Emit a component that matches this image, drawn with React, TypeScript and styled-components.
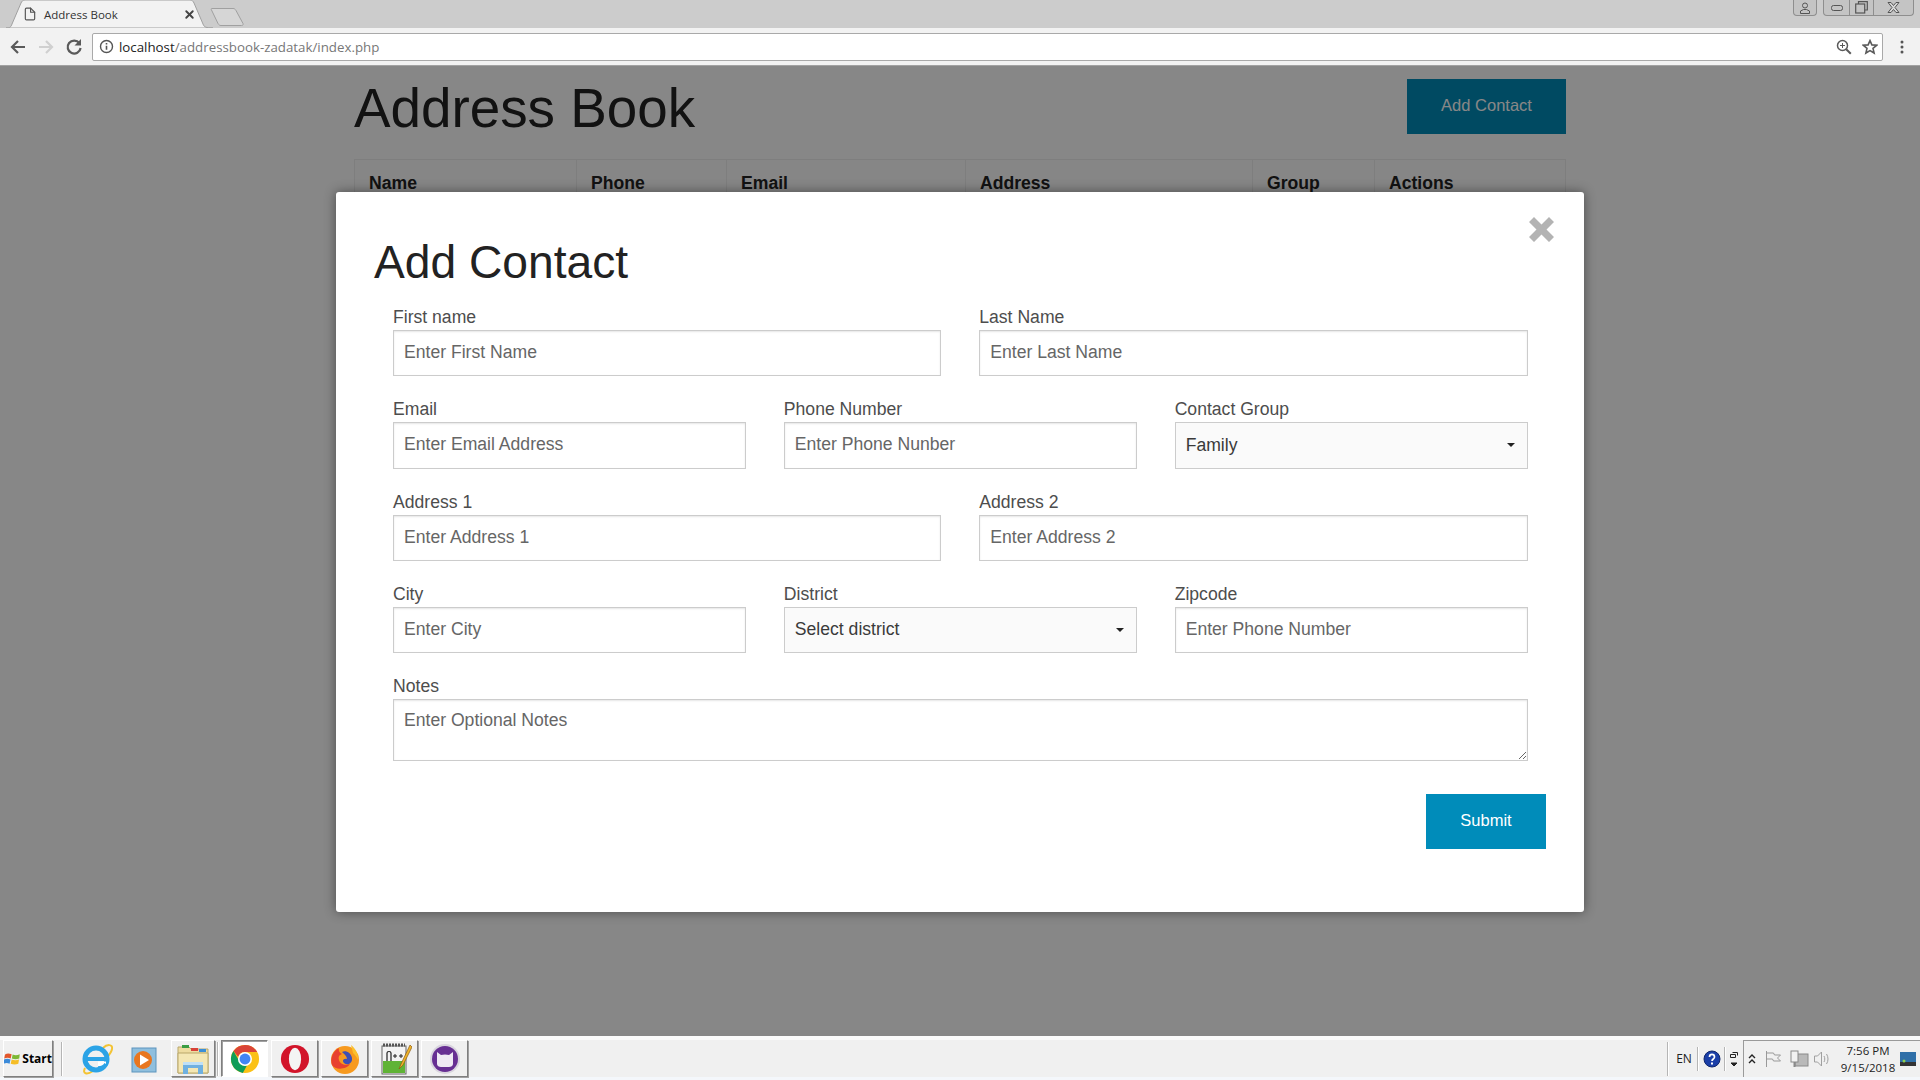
import React from "react";
import styled, { createGlobalStyle } from "styled-components";
import { FiFile, FiX } from "react-icons/fi";

const GlobalStyle = createGlobalStyle`
  html, body {
    margin: 0;
    padding: 0;
    height: 100%;
    overflow: hidden;
    background: #fff;
  }
  * {
    box-sizing: border-box;
  }
`;

const Screen = styled.div`
  display: flex;
  flex-direction: column;
  width: 1920px;
  height: 1080px;
  font-family: "Liberation Sans", Arial, sans-serif;
`;

/* browser window */
const TabStrip = styled.div`
  display: flex;
  align-items: flex-end;
  justify-content: space-between;
  height: 28px;
  background: #cccccc;
  flex-shrink: 0;
`;

const Tabs = styled.div`
  display: flex;
  align-items: flex-end;
  padding-left: 6px;
`;

const Tab = styled.div`
  position: relative;
  display: flex;
  align-items: center;
  width: 207px;
  height: 28px;
  padding: 0 17px 0 17px;
  color: #333;
  font-family: "Open Sans", sans-serif;
  font-size: 11.5px;
`;

const TabShape = styled.svg`
  position: absolute;
  left: 0;
  top: 0;
`;

const TabIcon = styled(FiFile)`
  position: relative;
  font-size: 14px;
  color: #555;
  margin-right: 7px;
`;

const TabTitle = styled.span`
  position: relative;
  flex: 1;
`;

const TabClose = styled(FiX)`
  position: relative;
  font-size: 13px;
  stroke-width: 3.5;
  color: #444;
`;

const NewTab = styled.svg`
  margin-left: -3px;
  margin-bottom: 1px;
`;

const WindowButtons = styled.div`
  display: flex;
  align-self: flex-start;
  gap: 6px;
  padding-right: 6px;
`;

const WindowGroup = styled.div`
  display: flex;
  height: 16px;
  border: 1px solid #8e8e8e;
  border-top: none;
  border-radius: 0 0 4px 4px;
  background: #c4c4c4;
`;

const WindowButton = styled.div<{ $w: number }>`
  display: flex;
  align-items: center;
  justify-content: center;
  width: ${(p) => p.$w}px;
  & + & {
    border-left: 1px solid #8e8e8e;
  }
`;

const Toolbar = styled.div`
  display: flex;
  align-items: center;
  height: 38px;
  padding: 0 0 0 8px;
  background: #f2f2f2;
  border-bottom: 1px solid #a2a2a2;
  flex-shrink: 0;
`;

const NavIcons = styled.div`
  display: flex;
  align-items: center;
  gap: 8px;
  width: 84px;
`;

const Omnibox = styled.div`
  display: flex;
  align-items: center;
  width: 1791px;
  height: 28px;
  padding: 0 4px 0 6px;
  background: #fff;
  border: 1px solid #a9a9a9;
  border-radius: 2px;
`;

const Url = styled.div`
  flex: 1;
  margin-left: 5px;
  font-family: "Open Sans", sans-serif;
  font-size: 13.3px;
  color: #777;
`;

const UrlHost = styled.span`
  color: #222;
`;

const OmniIcons = styled.div`
  display: flex;
  align-items: center;
  gap: 10px;
`;

const MenuDots = styled.svg`
  margin-left: 17px;
`;

/* the page behind the dialog */
const Page = styled.main`
  position: relative;
  flex: 1;
  overflow: hidden;
  background: #fff;
`;

const Container = styled.div`
  width: 1212px;
  margin: 0 auto;
`;

const PageHeader = styled.header`
  display: flex;
  align-items: flex-start;
  justify-content: space-between;
  height: 93px;
  padding-top: 13px;
`;

const PageTitle = styled.h1`
  margin: 0;
  font-size: 54.8px;
  line-height: 58px;
  font-weight: 400;
  color: #222;
`;

const PrimaryButton = styled.button<{ $w: number }>`
  width: ${(p) => p.$w}px;
  height: 55px;
  padding: 0 0 2px;
  border: none;
  background: #008cba;
  color: #fff;
  font-family: "Liberation Sans", Arial, sans-serif;
  font-size: 16.5px;
`;

const Table = styled.table`
  width: 100%;
  table-layout: fixed;
  border-collapse: collapse;
  background: #fff;
  border: 1px solid #eeeeee;
`;

const HeadCell = styled.th<{ $w?: number }>`
  width: ${(p) => (p.$w ? `${p.$w}px` : "auto")};
  height: 60px;
  padding: 11px 14px;
  border: 1px solid #eeeeee;
  background: #fdfdfd;
  text-align: left;
  vertical-align: top;
  font-size: 17.6px;
  line-height: 24px;
  font-weight: 700;
  color: #222;
`;

/* dialog */
const Overlay = styled.div`
  position: absolute;
  inset: 0;
  display: flex;
  justify-content: center;
  padding-top: 126px;
  background: rgba(0, 0, 0, 0.47);
`;

const Modal = styled.section`
  position: relative;
  width: 1248px;
  height: 720px;
  padding: 41px 38px 0;
  background: #fff;
  border-radius: 3px;
  box-shadow: 0 0 12px rgba(0, 0, 0, 0.45);
`;

const CloseButton = styled.svg`
  position: absolute;
  top: 25px;
  right: 30px;
`;

const ModalTitle = styled.h2`
  margin: 0 0 9px;
  font-size: 46.2px;
  line-height: 58px;
  font-weight: 400;
  color: #222;
`;

const Form = styled.form`
  display: flex;
  flex-direction: column;
  gap: 16px;
  padding: 0 18.5px 0 19px;
`;

const FormRow = styled.div<{ $cols: number }>`
  display: grid;
  grid-template-columns: repeat(${(p) => p.$cols}, 1fr);
  column-gap: 38px;
`;

const Field = styled.label`
  display: flex;
  flex-direction: column;
  color: #4d4d4d;
  font-size: 17.6px;
`;

const FieldLabel = styled.span`
  display: block;
  height: 30px;
  padding-top: 4px;
  line-height: 26px;
`;

const Input = styled.input`
  width: 100%;
  height: 46.25px;
  padding: 0 10px 1px;
  border: 1px solid #cccccc;
  box-shadow: inset 0 1px 2px rgba(0, 0, 0, 0.1);
  background: #fff;
  font-family: "Liberation Sans", Arial, sans-serif;
  font-size: 17.6px;
  color: #222;
  outline: none;
  &::placeholder {
    color: #666;
    opacity: 1;
  }
`;

const SelectWrap = styled.div`
  position: relative;
  &::after {
    content: "";
    position: absolute;
    right: 13px;
    top: 21px;
    border: 4px solid transparent;
    border-top-color: #222;
    border-bottom: none;
  }
`;

const Select = styled.select`
  display: block;
  width: 100%;
  height: 46.25px;
  padding: 0 10px 1px;
  border: 1px solid #cccccc;
  border-radius: 0;
  background: #fafafa;
  appearance: none;
  font-family: "Liberation Sans", Arial, sans-serif;
  font-size: 17.6px;
  color: #3a3a3a;
  outline: none;
`;

const TextArea = styled.textarea`
  display: block;
  width: 100%;
  height: 62px;
  padding: 10px;
  border: 1px solid #cccccc;
  box-shadow: inset 0 1px 2px rgba(0, 0, 0, 0.1);
  font-family: "Liberation Sans", Arial, sans-serif;
  font-size: 17.6px;
  line-height: 20px;
  outline: none;
  resize: vertical;
  &::placeholder {
    color: #666;
    opacity: 1;
  }
`;

const FormFooter = styled.div`
  display: flex;
  justify-content: flex-end;
  margin: 17px -18.5px 0 0;
`;

/* windows taskbar */
const Taskbar = styled.footer`
  display: flex;
  align-items: center;
  height: 44px;
  padding: 0 0 0 3px;
  background: #f0f0f0;
  border-top: 4px solid #fbfbfb;
  border-bottom: 3px solid #f4f7fb;
  flex-shrink: 0;
`;

const RaisedButton = styled.div<{ $w: number; $active?: boolean }>`
  display: flex;
  align-items: center;
  justify-content: center;
  width: ${(p) => p.$w}px;
  height: 37px;
  background: ${(p) => (p.$active ? "#ffffff" : "#f0f0f0")};
  border: 1px solid;
  border-color: ${(p) =>
    p.$active ? "#7f7f7f #ffffff #ffffff #7f7f7f" : "#ffffff #7f7f7f #7f7f7f #ffffff"};
  box-shadow: ${(p) =>
    p.$active ? "inset 1px 1px 0 #a0a0a0" : "1px 1px 0 #a0a0a0"};
`;

const StartLabel = styled.span`
  margin-left: 1px;
  font-family: "Open Sans", sans-serif;
  font-size: 12px;
  font-weight: 700;
  color: #000;
`;

const Divider = styled.div<{ $ml: number; $h?: number }>`
  width: 2px;
  height: ${(p) => p.$h ?? 34}px;
  margin-left: ${(p) => p.$ml}px;
  background: #b5b5b5;
  border-right: 1px solid #fff;
  flex-shrink: 0;
`;

const QuickLaunch = styled.div`
  display: flex;
  align-items: center;
  gap: 17px;
  padding: 0 11px 0 16px;
`;

const TaskButtons = styled.div`
  display: flex;
  gap: 3px;
  margin-left: 2px;
`;

const Tray = styled.div`
  display: flex;
  align-items: center;
  align-self: stretch;
  margin-left: auto;
  font-family: "Open Sans", sans-serif;
`;

const LangText = styled.span`
  margin-left: 5px;
  width: 20px;
  text-align: center;
  font-size: 12px;
  color: #222;
`;

const TrayItem = styled.span<{ $ml: number }>`
  display: flex;
  margin-left: ${(p) => p.$ml}px;
`;

const TrayIcons = styled.div`
  display: flex;
  align-items: center;
  align-self: stretch;
  margin-left: 3px;
  padding: 0 4px 0 3px;
  border-left: 1px solid #9a9a9a;
  border-top: 1px solid #9a9a9a;
`;

const Clock = styled.div`
  width: 64px;
  margin-left: 5px;
  text-align: center;
  font-size: 11.5px;
  line-height: 17px;
  color: #222;
`;

const ChromeIconBack = () => (
  <svg width="20" height="20" viewBox="0 0 20 20" fill="none" stroke="#5a5a5a" strokeWidth="2.2">
    <path d="M17 10H4M10 4l-6 6 6 6" />
  </svg>
);

const ChromeIconForward = () => (
  <svg width="20" height="20" viewBox="0 0 20 20" fill="none" stroke="#d0d0d0" strokeWidth="2.2">
    <path d="M3 10h13M10 4l6 6-6 6" />
  </svg>
);

const ChromeIconReload = () => (
  <svg width="20" height="20" viewBox="0 0 20 20" fill="none">
    <path d="M15.400 6.200A6.500 6.500 0 1 0 16.600 11" stroke="#5a5a5a" strokeWidth="2.2" />
    <path d="M17 2v6.500h-6.500z" fill="#5a5a5a" />
  </svg>
);

const InfoIcon = () => (
  <svg width="15" height="15" viewBox="0 0 15 15" fill="none">
    <circle cx="7.500" cy="7.500" r="6" stroke="#555" strokeWidth="1.4" />
    <path d="M7.500 6.800v4M7.500 4v1.600" stroke="#555" strokeWidth="1.6" />
  </svg>
);

const ZoomIcon = () => (
  <svg width="16" height="16" viewBox="0 0 16 16" fill="none" stroke="#5a5a5a">
    <circle cx="6.500" cy="6.500" r="5" strokeWidth="1.5" />
    <path d="M10.200 10.200l4.600 4.600" strokeWidth="2" />
    <path d="M4 6.500h5M6.500 4v5" strokeWidth="1" />
  </svg>
);

const StarIcon = () => (
  <svg width="16" height="16" viewBox="0 0 16 16" fill="none" stroke="#5a5a5a" strokeWidth="1.6">
    <path d="M8 1.600l1.900 4.300 4.700.4-3.600 3.100 1.100 4.600L8 11.600l-4.100 2.400L5 9.400 1.400 6.300l4.700-.4z" />
  </svg>
);

const WindowsFlag = () => (
  <svg width="18" height="16" viewBox="0 0 17 15">
    <path d="M1 3c2-1.300 4-1.300 6.500-.2L6.600 7C4.500 6 2.500 6 .2 7z" fill="#e2572c" />
    <path d="M8.500 3c2.200 1 4.300 1 7-.2L15 7c-2.500 1-4.600 1-7.300 0z" fill="#7db834" />
    <path d="M0 8c2.300-1 4.400-1 6.400 0l-.9 4.200c-2-1-4-1-6 0z" fill="#3b8ad9" />
    <path d="M7.500 8c2.600 1 4.800 1 7.300 0l-.7 4.200c-2.600 1-4.700 1-7.500 0z" fill="#f5bd26" />
  </svg>
);

const IeIcon = () => (
  <svg width="34" height="34" viewBox="0 0 34 34" fill="none">
    <path d="M6 26C3 32 8 33 14 29M24 6c4-4 10-4 9 1-.5 3-3 6-5 8" stroke="#f3c333" strokeWidth="2" />
    <circle cx="17" cy="17" r="11" stroke="#2ba3e6" strokeWidth="5" />
    <path d="M8 17h19" stroke="#2ba3e6" strokeWidth="4" />
    <path d="M27 22h-8" stroke="#fff" strokeWidth="5" />
    <path d="M19 26c3 0 6-1 8-4" stroke="#2ba3e6" strokeWidth="3.500" />
  </svg>
);

const MediaIcon = () => (
  <svg width="30" height="30" viewBox="0 0 30 30">
    <rect x="2" y="4" width="24" height="24" fill="#8fbfde" stroke="#5c94bd" />
    <circle cx="13" cy="16" r="9" fill="#e8761f" />
    <path d="M10 10.500v11l9-5.500z" fill="#fff" />
  </svg>
);

const FolderIcon = () => (
  <svg width="34" height="34" viewBox="0 0 34 34">
    <path d="M2 5h11l2 2h17v24H2z" fill="#eedca0" stroke="#b9a76a" />
    <path d="M6 3h7v3H6z" fill="#3a9d43" />
    <path d="M15 6h7v3h-7z" fill="#d8423a" />
    <path d="M23 7h7v3h-7z" fill="#3a8fd8" />
    <path d="M2 11h30v20H2z" fill="#f4e7b4" stroke="#b9a76a" />
    <path d="M7 20h20v12h-5v-6H12v6H7z" fill="#6fb0e0" />
    <path d="M7 20h20v3H7z" fill="#bfe0f6" />
  </svg>
);

const ChromeLogo = () => (
  <svg width="30" height="30" viewBox="0 0 32 32">
    <circle cx="16" cy="16" r="15" fill="#fbc116" />
    <path d="M16 1a15 15 0 0 1 13 7.500H16a7.500 7.500 0 0 0-7.200 5.400L3.700 7.400A15 15 0 0 1 16 1z" fill="#da4437" />
    <path d="M3.700 7.400l6 10.500a7.500 7.500 0 0 0 8.200 5.300L13.700 30.800A15 15 0 0 1 3.700 7.400z" fill="#0f9d58" />
    <circle cx="16" cy="16" r="7.500" fill="#fff" />
    <circle cx="16" cy="16" r="5.800" fill="#4285f4" />
  </svg>
);

const OperaLogo = () => (
  <svg width="30" height="30" viewBox="0 0 32 32">
    <circle cx="16" cy="16" r="15" fill="#d2142a" />
    <ellipse cx="16" cy="16" rx="6.500" ry="12" fill="#f4f4f4" />
  </svg>
);

const FirefoxLogo = () => (
  <svg width="32" height="32" viewBox="0 0 32 32">
    <circle cx="16" cy="17" r="14" fill="#f79a1f" />
    <path d="M3 22A14 14 0 0 1 10 5c-1 3 1 5 3 6-3 1-4 3-3 6 1 4 6 6 11 4-3 5-14 7-18 1z" fill="#e8412f" />
    <path d="M13 9c4-2 9 1 10 6 .5 3-1 5-3 6-3 1-6-1-6-3 0-1.500 2-2.500 4-2 0-3-3-5-5-7z" fill="#3f4fb4" />
    <path d="M22 2c4 3 8 9 7 15-1-3-3-5-5-7-.5-3-1.500-5-2-8z" fill="#fbc02d" />
  </svg>
);

const NotepadLogo = () => (
  <svg width="34" height="34" viewBox="0 0 34 34">
    <rect x="4" y="4" width="24" height="28" fill="#f4f4f4" stroke="#666" />
    <path d="M5 19h22v12H5z" fill="#5fb336" />
    <path d="M5 3h22" stroke="#555" strokeDasharray="2 1" strokeWidth="3" />
    <path d="M9 19v-8c0-2 4-2 4 0v8" fill="none" stroke="#222" strokeWidth="1.200" />
    <path d="M15 14h4M17 12v4M21 14h4M23 12v4" stroke="#222" />
    <path d="M32 3l-9 19-2 5 4-4 9-18z" fill="#f0b429" stroke="#8a5a14" strokeWidth=".7" />
  </svg>
);

const GitKrakenLogo = () => (
  <svg width="32" height="32" viewBox="0 0 32 32">
    <circle cx="16" cy="16" r="15" fill="#d9d5de" />
    <circle cx="16" cy="16" r="13" fill="#672f93" />
    <path d="M8 9l4 3c2.500-.7 5.500-.7 8 0l4-3v12c0 2-2 3-4 3h-8c-2 0-4-1-4-3z" fill="#efe9f4" />
  </svg>
);

const TrayHelp = () => (
  <svg width="18" height="18" viewBox="0 0 18 18">
    <circle cx="9" cy="9" r="8" fill="#1b3fa8" stroke="#10266b" />
    <path d="M6.500 7c0-3.500 5-3.500 5 0 0 2-2.500 2-2.500 4" stroke="#fff" strokeWidth="1.700" fill="none" />
    <rect x="8" y="12.500" width="2" height="2" fill="#fff" />
  </svg>
);

const TrayWindows = () => (
  <svg width="12" height="20" viewBox="0 0 12 20" fill="none" stroke="#222">
    <path d="M2.500 5.500h5v3h-5zM4.500 3.500h5v3" />
    <path d="M3 14h6l-3 3z" fill="#222" />
  </svg>
);

const TrayChevron = () => (
  <svg width="10" height="12" viewBox="0 0 10 12" fill="none" stroke="#222" strokeWidth="1.400">
    <path d="M2 5l3-3 3 3M2 10l3-3 3 3" />
  </svg>
);

const TrayFlag = () => (
  <svg width="18" height="18" viewBox="0 0 18 18" fill="none" stroke="#999">
    <path d="M2.500 1v16M2.500 3h7l1 2h6l-3 3 3 3h-7l-1-2h-6" />
  </svg>
);

const TrayNetwork = () => (
  <svg width="20" height="18" viewBox="0 0 20 18">
    <rect x="6" y="4" width="13" height="12" fill="#b9b9b9" stroke="#8a8a8a" />
    <rect x="2" y="1" width="7" height="11" fill="#f2f2f2" stroke="#8a8a8a" />
    <path d="M5.500 12v5" stroke="#8a8a8a" strokeWidth="2" />
  </svg>
);

const TrayVolume = () => (
  <svg width="18" height="18" viewBox="0 0 18 18" fill="none" stroke="#a0a0a0">
    <path d="M1.500 6h3l4-4v14l-4-4h-3z" />
    <path d="M11 6c1 2 1 4 0 6M13.500 4c2 3 2 7 0 10" />
  </svg>
);

const ShowDesktop = () => (
  <svg width="16" height="14" viewBox="0 0 16 14">
    <rect width="16" height="14" fill="#2f6fa8" />
    <rect y="10" width="16" height="4" fill="#333" />
    <circle cx="4" cy="9" r="1.500" fill="#8fd14f" />
  </svg>
);

const HEADERS: { label: string; width?: number }[] = [
  { label: "Name", width: 222 },
  { label: "Phone", width: 150 },
  { label: "Email", width: 239 },
  { label: "Address", width: 287 },
  { label: "Group", width: 122 },
  { label: "Actions" },
];

export default function App() {
  return (
    <Screen>
      <GlobalStyle />
      <TabStrip>
        <Tabs>
          <Tab>
            <TabShape width="207" height="28" viewBox="0 0 207 28">
              <path d="M0 28c4 0 5-1 6-4L15 3c1-2 2-3 4-3h165c2 0 3 1 4 3l9 21c1 3 3 4 10 4z" fill="#f2f2f2" stroke="#a0a0a0" />
            </TabShape>
            <TabIcon />
            <TabTitle>Address Book</TabTitle>
            <TabClose />
          </Tab>
          <NewTab width="36" height="20" viewBox="0 0 36 20">
            <path d="M2 1.500h21c1.500 0 2 .5 3 2l7 13c.5 1 0 2-1.500 2H11c-1.500 0-2-.5-3-2L1.500 3C1 2 1 1.500 2 1.500z" fill="#d6d6d6" stroke="#a0a0a0" />
          </NewTab>
        </Tabs>
        <WindowButtons>
          <WindowGroup>
            <WindowButton $w={22}>
              <svg width="12" height="12" viewBox="0 0 12 12" fill="none" stroke="#555">
                <circle cx="6" cy="3.500" r="2.500" />
                <path d="M1.500 11.500V9l3-1.500h3l3 1.500v2.500z" />
              </svg>
            </WindowButton>
          </WindowGroup>
          <WindowGroup>
            <WindowButton $w={25}>
              <svg width="12" height="6" viewBox="0 0 12 6" fill="none" stroke="#555">
                <rect x=".5" y=".5" width="11" height="5" rx="2" />
              </svg>
            </WindowButton>
            <WindowButton $w={24}>
              <svg width="13" height="13" viewBox="0 0 13 13" fill="none" stroke="#555" strokeWidth="1.200">
                <path d="M3.500 3V.7h8.800V9H10" />
                <rect x=".7" y="3" width="9" height="9" />
              </svg>
            </WindowButton>
            <WindowButton $w={40}>
              <svg width="13" height="11" viewBox="0 0 13 11" fill="#d8d8d8" stroke="#555">
                <path d="M1 .5h3l2.500 3 2.500-3h3L8 5.500l4 5H9L6.500 7.500 4 10.500H1l4-5z" />
              </svg>
            </WindowButton>
          </WindowGroup>
        </WindowButtons>
      </TabStrip>

      <Toolbar>
        <NavIcons>
          <ChromeIconBack />
          <ChromeIconForward />
          <ChromeIconReload />
        </NavIcons>
        <Omnibox>
          <InfoIcon />
          <Url>
            <UrlHost>localhost</UrlHost>/addressbook-zadatak/index.php
          </Url>
          <OmniIcons>
            <ZoomIcon />
            <StarIcon />
          </OmniIcons>
        </Omnibox>
        <MenuDots width="4" height="14" viewBox="0 0 4 14" fill="#555">
          <circle cx="2" cy="2" r="1.500" />
          <circle cx="2" cy="7" r="1.500" />
          <circle cx="2" cy="12" r="1.500" />
        </MenuDots>
      </Toolbar>

      <Page>
        <Container>
          <PageHeader>
            <PageTitle>Address Book</PageTitle>
            <PrimaryButton $w={159}>Add Contact</PrimaryButton>
          </PageHeader>
          <Table>
            <thead>
              <tr>
                {HEADERS.map((h) => (
                  <HeadCell key={h.label} $w={h.width}>
                    {h.label}
                  </HeadCell>
                ))}
              </tr>
            </thead>
          </Table>
        </Container>

        <Overlay>
          <Modal>
            <CloseButton width="25" height="25" viewBox="0 0 25 25">
              <path d="M5 0l7.500 7.500L20 0l5 5-7.500 7.500L25 20l-5 5-7.500-7.500L5 25l-5-5 7.500-7.500L0 5z" fill="#b3b3b3" />
            </CloseButton>
            <ModalTitle>Add Contact</ModalTitle>
            <Form>
              <FormRow $cols={2}>
                <Field>
                  <FieldLabel>First name</FieldLabel>
                  <Input placeholder="Enter First Name" />
                </Field>
                <Field>
                  <FieldLabel>Last Name</FieldLabel>
                  <Input placeholder="Enter Last Name" />
                </Field>
              </FormRow>
              <FormRow $cols={3}>
                <Field>
                  <FieldLabel>Email</FieldLabel>
                  <Input placeholder="Enter Email Address" />
                </Field>
                <Field>
                  <FieldLabel>Phone Number</FieldLabel>
                  <Input placeholder="Enter Phone Nunber" />
                </Field>
                <Field>
                  <FieldLabel>Contact Group</FieldLabel>
                  <SelectWrap>
                    <Select defaultValue="Family">
                      <option>Family</option>
                      <option>Friends</option>
                      <option>Work</option>
                    </Select>
                  </SelectWrap>
                </Field>
              </FormRow>
              <FormRow $cols={2}>
                <Field>
                  <FieldLabel>Address 1</FieldLabel>
                  <Input placeholder="Enter Address 1" />
                </Field>
                <Field>
                  <FieldLabel>Address 2</FieldLabel>
                  <Input placeholder="Enter Address 2" />
                </Field>
              </FormRow>
              <FormRow $cols={3}>
                <Field>
                  <FieldLabel>City</FieldLabel>
                  <Input placeholder="Enter City" />
                </Field>
                <Field>
                  <FieldLabel>District</FieldLabel>
                  <SelectWrap>
                    <Select defaultValue="Select district">
                      <option>Select district</option>
                    </Select>
                  </SelectWrap>
                </Field>
                <Field>
                  <FieldLabel>Zipcode</FieldLabel>
                  <Input placeholder="Enter Phone Number" />
                </Field>
              </FormRow>
              <FormRow $cols={1}>
                <Field>
                  <FieldLabel>Notes</FieldLabel>
                  <TextArea placeholder="Enter Optional Notes" />
                </Field>
              </FormRow>
              <FormFooter>
                <PrimaryButton type="button" $w={120}>
                  Submit
                </PrimaryButton>
              </FormFooter>
            </Form>
          </Modal>
        </Overlay>
      </Page>

      <Taskbar>
        <RaisedButton $w={50}>
          <WindowsFlag />
          <StartLabel>Start</StartLabel>
        </RaisedButton>
        <Divider $ml={8} />
        <QuickLaunch>
          <IeIcon />
          <MediaIcon />
        </QuickLaunch>
        <RaisedButton $w={44}>
          <FolderIcon />
        </RaisedButton>
        <Divider $ml={2} />
        <TaskButtons>
          <RaisedButton $w={47} $active>
            <ChromeLogo />
          </RaisedButton>
          <RaisedButton $w={47}>
            <OperaLogo />
          </RaisedButton>
          <RaisedButton $w={47}>
            <FirefoxLogo />
          </RaisedButton>
          <RaisedButton $w={47}>
            <NotepadLogo />
          </RaisedButton>
          <RaisedButton $w={47}>
            <GitKrakenLogo />
          </RaisedButton>
        </TaskButtons>
        <Tray>
          <Divider $ml={0} />
          <LangText>EN</LangText>
          <Divider $ml={3} $h={24} />
          <TrayItem $ml={4}>
            <TrayHelp />
          </TrayItem>
          <Divider $ml={3} $h={24} />
          <TrayItem $ml={2}>
            <TrayWindows />
          </TrayItem>
          <TrayIcons>
            <TrayChevron />
            <TrayItem $ml={7}>
              <TrayFlag />
            </TrayItem>
            <TrayItem $ml={7}>
              <TrayNetwork />
            </TrayItem>
            <TrayItem $ml={4}>
              <TrayVolume />
            </TrayItem>
            <Clock>
              7:56 PM
              <br />
              9/15/2018
            </Clock>
            <ShowDesktop />
          </TrayIcons>
        </Tray>
      </Taskbar>
    </Screen>
  );
}
